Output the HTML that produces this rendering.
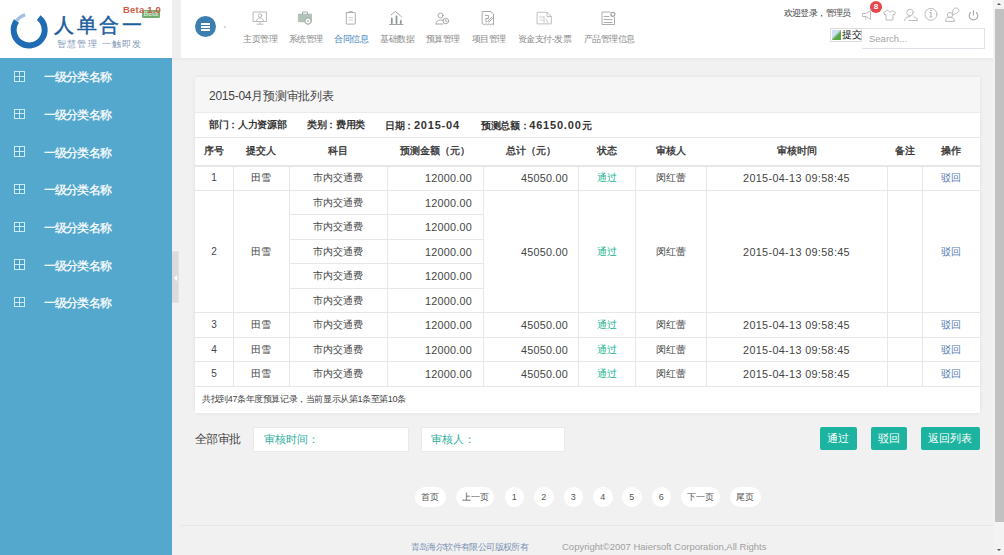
<!DOCTYPE html>
<html><head><meta charset="utf-8">
<style>
*{margin:0;padding:0;box-sizing:border-box;}
html,body{width:1004px;height:555px;overflow:hidden;}
body{position:relative;background:#f1f1f1;font-family:"Liberation Sans",sans-serif;color:#333;}
.abs{position:absolute;}
#logo{left:0;top:0;width:172px;height:58px;background:#fff;}
#gstrip{left:172px;top:0;width:9px;height:58px;background:#efefef;}
#hdr{left:181px;top:0;width:812px;height:58px;background:#fff;}
#side{left:0;top:58px;width:172px;height:497px;background:#54a8ce;}
.si{position:absolute;left:0;width:172px;height:38px;color:#fff;font-size:12px;}
.si .ic{position:absolute;left:14px;top:0.5px;width:11px;height:10.5px;border:1px solid #c8ecf9;background:#4d9fc6;}
.si .ic:before{content:"";position:absolute;left:4px;top:0;width:1px;height:8.5px;background:#c8ecf9;}
.si .ic:after{content:"";position:absolute;left:0;top:3.8px;width:9px;height:1px;background:#c8ecf9;}
.si .tx{position:absolute;left:43.5px;top:0.8px;line-height:12px;letter-spacing:-0.75px;-webkit-text-stroke:0.25px #fff;white-space:nowrap;}
#handle{left:172px;top:251px;width:7px;height:52px;background:#dbdbdb;border:1px solid #e3e3e3;border-left:0;}
#sb{left:993px;top:0;width:11px;height:555px;background:#f3f3f3;}
#thumb{left:995px;top:9px;width:9px;height:512.5px;background:#c1c1c1;}
.nav{position:absolute;top:0;height:58px;text-align:center;font-size:9px;letter-spacing:-0.5px;color:#888;white-space:nowrap;}
.nav .t{position:absolute;top:33.5px;left:0;right:0;line-height:10px;}
.nav svg{position:absolute;top:11px;left:50%;margin-left:-7px;}
#panel{left:195px;top:77px;width:786px;height:335px;background:#fff;}
#ph{left:0;top:0;width:786px;height:35.5px;background:#f6f6f6;border-bottom:1px solid #e7eaec;}
table{border-collapse:collapse;}
.n{font-size:11px;letter-spacing:0.8px;}
.btn{top:427px;height:23px;background:#1cb4a0;color:#fff;font-size:11px;line-height:23px;text-align:center;border-radius:2px;white-space:nowrap;}
.pg{top:487px;height:20px;background:#fff;color:#555;font-size:9px;line-height:20px;text-align:center;border-radius:10px;white-space:nowrap;}
</style></head>
<body>
<div class="abs" id="logo">
  <svg class="abs" style="left:0;top:0" width="54" height="58" viewBox="0 0 54 58">
    <path d="M38.7 17.7 A15.5 15.5 0 1 1 16.5 21" fill="none" stroke="#1f6cb4" stroke-width="6"/>
    <path d="M16.5 21 A15.5 15.5 0 0 1 25.2 14.9" fill="none" stroke="#6d9fd2" stroke-width="3.5" opacity=".65"/>
  </svg>
  <div class="abs" style="left:54px;top:12px;font-family:'Liberation Serif',serif;font-size:20px;line-height:26px;color:#1d5c9e;-webkit-text-stroke:0.45px #1d5c9e;letter-spacing:2.6px;white-space:nowrap">人单合一</div>
  <div class="abs" style="left:57px;top:38.5px;font-size:9px;line-height:11px;color:#7f98b6;font-weight:500;letter-spacing:1.2px;white-space:nowrap">智慧管理 一触即发</div>
  <div class="abs" style="left:141.5px;top:10px;width:18.5px;height:7.5px;border-radius:1.5px;background:#74ad72;color:#e8f5e8;font-size:7px;line-height:8px;text-align:center">Beta</div>
  <div class="abs" style="left:123px;top:5px;font-size:9.5px;line-height:10px;color:#cf5d48;font-weight:bold;white-space:nowrap;letter-spacing:0.2px">Beta 1.0</div>
</div>
<div class="abs" id="gstrip"></div>
<div class="abs" id="hdr">
  <div class="abs" style="left:14px;top:16px;width:21px;height:21px;border-radius:50%;background:#3b7fb0"></div>
  <div class="abs" style="left:20px;top:22.5px;width:9px;height:2px;background:#fff"></div>
  <div class="abs" style="left:20px;top:25.5px;width:9px;height:2px;background:#fff"></div>
  <div class="abs" style="left:20px;top:28.5px;width:9px;height:2px;background:#fff"></div>
  <div class="abs" style="left:43px;top:26px;width:2px;height:2px;background:#ccc;border-radius:1px"></div>
</div>
<div class="nav" style="left:243px;width:34px"><div class="t">主页管理</div></div>
<div class="nav" style="left:288.5px;width:34px"><div class="t">系统管理</div></div>
<div class="nav" style="left:334px;width:34px;color:#3a80bd"><div class="t">合同信息</div></div>
<div class="nav" style="left:380px;width:34px"><div class="t">基础数据</div></div>
<div class="nav" style="left:425.5px;width:34px"><div class="t">预算管理</div></div>
<div class="nav" style="left:471.5px;width:34px"><div class="t">项目管理</div></div>
<div class="nav" style="left:517.5px;width:54px"><div class="t">资金支付-发票</div></div>
<div class="nav" style="left:583.5px;width:49px"><div class="t">产品管理信息</div></div>
<div class="abs" style="left:783.5px;top:8px;font-size:9px;letter-spacing:-0.6px;line-height:11px;color:#444;white-space:nowrap">欢迎登录，管理员</div>

<svg class="abs" style="left:0;top:0" width="1004" height="58" viewBox="0 0 1004 58" fill="none" stroke-linecap="round" stroke-linejoin="round">
<g stroke="#ababab" stroke-width="0.8">
<rect x="253.5" y="12" width="13" height="9.5"/><path d="M260 21.5v2M257 24.2h6"/><circle cx="260" cy="15.6" r="1.8"/><path d="M256.6 20.6c.5-1.8 1.8-2.7 3.4-2.7s2.9.9 3.4 2.7"/>
</g>
<g>
<path d="M298.8 14.2h12.6v7.5h-12.6z" fill="#b4c3ba" stroke="#a0b2a7" stroke-width=".8"/><path d="M302.5 14.2v-2.2h5v2.2" stroke="#a0b2a7" stroke-width="1"/>
<circle cx="308" cy="21" r="3.1" fill="#fff" stroke="#a8b4ad" stroke-width="1.3" stroke-dasharray="1.2 .6"/><circle cx="308" cy="21" r="1.1" fill="#c0c8c3"/>
</g>
<g stroke="#a5a5a5" stroke-width="0.9">
<rect x="346.3" y="12.6" width="9" height="11.5" rx=".5"/><path d="M349.3 12.6v-1h3v1"/><path d="M349 17.5h3.5M349 20h3.5" stroke="#c8c8c8"/>
</g>
<g stroke="#9a9a9a" stroke-width="0.9">
<path d="M389.5 24.5h13.5"/><path d="M391.8 18.5v4.5M396.5 16.5v6.5M400.8 21v2" stroke-width="1.8" stroke="#8a9a90"/><path d="M391 15l4.5-3.5 4.5 3.8 1.6 1.6"/>
</g>
<g stroke="#a0a0a0" stroke-width="0.9">
<circle cx="440.5" cy="15.5" r="2.5"/><path d="M436 24c0-2.5 2-4 4.5-4s3 .5 3.5 1"/><path d="M436 24h7"/><circle cx="445.8" cy="21" r="2.8" fill="#fff"/><path d="M445.8 19.8v1.4l1 .6"/>
</g>
<g stroke="#a0a0a0" stroke-width="0.9">
<path d="M482.5 11.5h8.5l2.5 2.5v10.8l-1.5-1-1.5 1-1.5-1-1.5 1-1.5-1-1.5 1-2-1z"/><path d="M485.5 15.5h3v3h-2.5M486 22v-3.5M488 21l3.5-3.5 1 1-3.5 3.5z"/>
</g>
<g stroke="#b8b8b8" stroke-width="0.9">
<path d="M537.5 12.3h9.5l4.3 4.3v7.3h-13.8z"/><path d="M547 12.3v4.3h4.3"/><path d="M539.5 17h4.5M544 17v6M546 19l2 4M540 20h3" stroke="#c8c8c8"/>
</g>
<g stroke="#a5a5a5" stroke-width="0.9">
<path d="M610 12h-8v12.5h12.5v-7"/><path d="M604 16.5h5M604 19.5h8M604 22.5h8"/><circle cx="612.8" cy="14.3" r="2" stroke-width="1.2"/>
</g>
<g stroke="#b5b5b5" stroke-width="0.9">
<path d="M863 13.5h3l4.5-3v9l-4.5-3h-3z M865 16.5l1 3"/>
<path d="M887 10.5l-3.5 2 1.3 2.5 1.2-.6v5.6h7v-5.6l1.2.6 1.3-2.5-3.5-2c-.5 1-1.2 1.5-2 1.5s-1.5-.5-2-1.5z"/>
<circle cx="910" cy="12.5" r="3.3"/><path d="M904.5 20.5c0-2.5 2.5-4 5.5-4M909 20.5h8.5c0-2-1.5-3.5-3.5-3.5"/>
<circle cx="931" cy="14.3" r="6"/><path d="M931 12.5v4.5M930 17h2M930 12.5h1" stroke-width="1.1"/><circle cx="931" cy="10.5" r=".5" fill="#b0b0b0"/>
<circle cx="950" cy="15" r="2.6"/><path d="M945.5 21c0-2.5 2-3.8 4.5-3.8s4.5 1.3 4.5 3.8z"/><path d="M952.5 12c0-2 1.5-4 3.5-4s2.8 1 2.8 2.5-1.5 3-3.5 3l-1.2 1z"/>
<path d="M970.6 12.5a4.3 4.3 0 1 0 5.8 0M973.5 10.5v4.5" stroke="#a8a8a8" stroke-width="1.1"/>
</g>
</svg>
<div class="abs" style="left:870px;top:1px;width:12px;height:11.5px;border-radius:50%;background:#e5474f;color:#fff;font-size:8px;line-height:12px;text-align:center;font-weight:bold">8</div>
<div class="abs" style="left:830px;top:28px;width:32px;height:14px;border:1px solid #ddd;background:#fff">
  <div class="abs" style="left:1px;top:1px;width:9px;height:10px;background:linear-gradient(135deg,#cfe0f5 40%,#5aa545 60%)"></div>
  <div class="abs" style="left:11px;top:0px;font-size:10px;line-height:12px;color:#111;white-space:nowrap">提交</div>
</div>
<div class="abs" style="left:862px;top:28px;width:123px;height:21px;border:1px solid #e2e2e2;border-left:0;border-bottom-color:#dfe1e8;background:#fff">
  <div class="abs" style="left:7px;top:4px;font-size:9.5px;line-height:11px;color:#a5a5a5">Search...</div>
</div>

<div class="abs" id="side">
  <div class="si" style="top:12.50px"><div class="ic"></div><div class="tx">一级分类名称</div></div>
  <div class="si" style="top:50.15px"><div class="ic"></div><div class="tx">一级分类名称</div></div>
  <div class="si" style="top:87.80px"><div class="ic"></div><div class="tx">一级分类名称</div></div>
  <div class="si" style="top:125.45px"><div class="ic"></div><div class="tx">一级分类名称</div></div>
  <div class="si" style="top:163.10px"><div class="ic"></div><div class="tx">一级分类名称</div></div>
  <div class="si" style="top:200.75px"><div class="ic"></div><div class="tx">一级分类名称</div></div>
  <div class="si" style="top:238.40px"><div class="ic"></div><div class="tx">一级分类名称</div></div>
</div>
<div class="abs" id="handle"><div class="abs" style="left:1.5px;top:23px;width:0;height:0;border-top:3px solid transparent;border-bottom:3px solid transparent;border-right:3px solid #fff"></div></div>
<div class="abs" style="left:195px;top:77px;width:785px;height:336px;background:#fff;box-shadow:0 0 4px rgba(0,0,0,.07)"></div>
<div class="abs" style="left:195px;top:77px;width:785px;height:35px;background:#f6f6f6"></div>
<div class="abs" style="left:195px;top:112px;width:785px;height:1px;background:#ebebeb"></div>
<div class="abs" style="left:209px;top:89px;font-size:12px;letter-spacing:-0.25px;line-height:15px;color:#444;white-space:nowrap">2015-04月预测审批列表</div>
<div class="abs" style="left:209px;top:119px;font-size:9.8px;letter-spacing:-0.35px;line-height:12px;color:#333;font-weight:bold;white-space:nowrap">部门：人力资源部</div>
<div class="abs" style="left:307px;top:119px;font-size:9.8px;letter-spacing:-0.35px;line-height:12px;color:#333;font-weight:bold;white-space:nowrap">类别：费用类</div>
<div class="abs" style="left:385px;top:119px;font-size:9.8px;letter-spacing:-0.35px;line-height:12px;color:#333;font-weight:bold;white-space:nowrap">日期：<span class=n>2015-04</span></div>
<div class="abs" style="left:481px;top:119px;font-size:9.8px;letter-spacing:-0.35px;line-height:12px;color:#333;font-weight:bold;white-space:nowrap">预测总额：<span class=n>46150.00</span>元</div>
<div class="abs" style="left:195px;top:137px;width:785px;height:1px;background:#e7e7e7"></div>
<div class="abs" style="left:195px;top:145px;width:38px;text-align:center;font-size:9.8px;line-height:12px;color:#333;-webkit-text-stroke:0.35px #333;white-space:nowrap">序号</div>
<div class="abs" style="left:233px;top:145px;width:56.5px;text-align:center;font-size:9.8px;line-height:12px;color:#333;-webkit-text-stroke:0.35px #333;white-space:nowrap">提交人</div>
<div class="abs" style="left:289.5px;top:145px;width:97.5px;text-align:center;font-size:9.8px;line-height:12px;color:#333;-webkit-text-stroke:0.35px #333;white-space:nowrap">科目</div>
<div class="abs" style="left:387px;top:145px;width:96px;text-align:center;font-size:9.8px;line-height:12px;color:#333;-webkit-text-stroke:0.35px #333;white-space:nowrap">预测金额（元）</div>
<div class="abs" style="left:483px;top:145px;width:95px;text-align:center;font-size:9.8px;line-height:12px;color:#333;-webkit-text-stroke:0.35px #333;white-space:nowrap">总计（元）</div>
<div class="abs" style="left:578px;top:145px;width:57px;text-align:center;font-size:9.8px;line-height:12px;color:#333;-webkit-text-stroke:0.35px #333;white-space:nowrap">状态</div>
<div class="abs" style="left:635px;top:145px;width:71px;text-align:center;font-size:9.8px;line-height:12px;color:#333;-webkit-text-stroke:0.35px #333;white-space:nowrap">审核人</div>
<div class="abs" style="left:706px;top:145px;width:181px;text-align:center;font-size:9.8px;line-height:12px;color:#333;-webkit-text-stroke:0.35px #333;white-space:nowrap">审核时间</div>
<div class="abs" style="left:887px;top:145px;width:35px;text-align:center;font-size:9.8px;line-height:12px;color:#333;-webkit-text-stroke:0.35px #333;white-space:nowrap">备注</div>
<div class="abs" style="left:922px;top:145px;width:58px;text-align:center;font-size:9.8px;line-height:12px;color:#333;-webkit-text-stroke:0.35px #333;white-space:nowrap">操作</div>
<div class="abs" style="left:195px;top:165px;width:785px;height:2px;background:#e7e7e7"></div>
<div class="abs" style="left:195px;top:189.8px;width:785px;height:1px;background:#e7e7e7"></div>
<div class="abs" style="left:289.5px;top:214.3px;width:193.5px;height:1px;background:#e7e7e7"></div>
<div class="abs" style="left:289.5px;top:238.8px;width:193.5px;height:1px;background:#e7e7e7"></div>
<div class="abs" style="left:289.5px;top:263.3px;width:193.5px;height:1px;background:#e7e7e7"></div>
<div class="abs" style="left:289.5px;top:287.8px;width:193.5px;height:1px;background:#e7e7e7"></div>
<div class="abs" style="left:195px;top:312.3px;width:785px;height:1px;background:#e7e7e7"></div>
<div class="abs" style="left:195px;top:336.8px;width:785px;height:1px;background:#e7e7e7"></div>
<div class="abs" style="left:195px;top:361.3px;width:785px;height:1px;background:#e7e7e7"></div>
<div class="abs" style="left:195px;top:385.8px;width:785px;height:1px;background:#e7e7e7"></div>
<div class="abs" style="left:232.5px;top:167px;width:1px;height:219.5px;background:#e7e7e7"></div>
<div class="abs" style="left:289.0px;top:167px;width:1px;height:219.5px;background:#e7e7e7"></div>
<div class="abs" style="left:386.5px;top:167px;width:1px;height:219.5px;background:#e7e7e7"></div>
<div class="abs" style="left:482.5px;top:167px;width:1px;height:219.5px;background:#e7e7e7"></div>
<div class="abs" style="left:577.5px;top:167px;width:1px;height:219.5px;background:#e7e7e7"></div>
<div class="abs" style="left:634.5px;top:167px;width:1px;height:219.5px;background:#e7e7e7"></div>
<div class="abs" style="left:705.5px;top:167px;width:1px;height:219.5px;background:#e7e7e7"></div>
<div class="abs" style="left:886.5px;top:167px;width:1px;height:219.5px;background:#e7e7e7"></div>
<div class="abs" style="left:921.5px;top:167px;width:1px;height:219.5px;background:#e7e7e7"></div>
<div class="abs" style="left:195px;top:166.0px;width:38px;height:24.5px;line-height:24.5px;text-align:center;font-size:10px;color:#444;white-space:nowrap;">1</div>
<div class="abs" style="left:233px;top:166.0px;width:56.5px;height:24.5px;line-height:24.5px;text-align:center;font-size:10px;color:#444;white-space:nowrap;">田雪</div>
<div class="abs" style="left:289.5px;top:166.0px;width:97.5px;height:24.5px;line-height:24.5px;text-align:center;font-size:10px;color:#444;white-space:nowrap;">市内交通费</div>
<div class="abs" style="left:387px;top:166.0px;width:96px;height:24.5px;line-height:24.5px;text-align:right;padding-right:11px;font-size:10px;color:#444;white-space:nowrap;font-size:10.8px;letter-spacing:0.25px;">12000.00</div>
<div class="abs" style="left:483px;top:166.0px;width:95px;height:24.5px;line-height:24.5px;text-align:right;padding-right:11px;font-size:10px;color:#444;white-space:nowrap;font-size:10.8px;letter-spacing:0.25px;padding-right:10px;">45050.00</div>
<div class="abs" style="left:578px;top:166.0px;width:57px;height:24.5px;line-height:24.5px;text-align:center;font-size:10px;color:#1ab394;white-space:nowrap;">通过</div>
<div class="abs" style="left:635px;top:166.0px;width:71px;height:24.5px;line-height:24.5px;text-align:center;font-size:10px;color:#444;white-space:nowrap;">闵红蕾</div>
<div class="abs" style="left:706px;top:166.0px;width:181px;height:24.5px;line-height:24.5px;text-align:center;font-size:10px;color:#444;white-space:nowrap;font-size:10.8px;letter-spacing:0.35px;">2015-04-13 09:58:45</div>
<div class="abs" style="left:922px;top:166.0px;width:58px;height:24.5px;line-height:24.5px;text-align:center;font-size:10px;color:#5a80b5;white-space:nowrap;">驳回</div>
<div class="abs" style="left:195px;top:190.5px;width:38px;height:122.5px;line-height:122.5px;text-align:center;font-size:10px;color:#444;white-space:nowrap;">2</div>
<div class="abs" style="left:233px;top:190.5px;width:56.5px;height:122.5px;line-height:122.5px;text-align:center;font-size:10px;color:#444;white-space:nowrap;">田雪</div>
<div class="abs" style="left:289.5px;top:190.5px;width:97.5px;height:24.5px;line-height:24.5px;text-align:center;font-size:10px;color:#444;white-space:nowrap;">市内交通费</div>
<div class="abs" style="left:387px;top:190.5px;width:96px;height:24.5px;line-height:24.5px;text-align:right;padding-right:11px;font-size:10px;color:#444;white-space:nowrap;font-size:10.8px;letter-spacing:0.25px;">12000.00</div>
<div class="abs" style="left:289.5px;top:215.0px;width:97.5px;height:24.5px;line-height:24.5px;text-align:center;font-size:10px;color:#444;white-space:nowrap;">市内交通费</div>
<div class="abs" style="left:387px;top:215.0px;width:96px;height:24.5px;line-height:24.5px;text-align:right;padding-right:11px;font-size:10px;color:#444;white-space:nowrap;font-size:10.8px;letter-spacing:0.25px;">12000.00</div>
<div class="abs" style="left:289.5px;top:239.5px;width:97.5px;height:24.5px;line-height:24.5px;text-align:center;font-size:10px;color:#444;white-space:nowrap;">市内交通费</div>
<div class="abs" style="left:387px;top:239.5px;width:96px;height:24.5px;line-height:24.5px;text-align:right;padding-right:11px;font-size:10px;color:#444;white-space:nowrap;font-size:10.8px;letter-spacing:0.25px;">12000.00</div>
<div class="abs" style="left:289.5px;top:264.0px;width:97.5px;height:24.5px;line-height:24.5px;text-align:center;font-size:10px;color:#444;white-space:nowrap;">市内交通费</div>
<div class="abs" style="left:387px;top:264.0px;width:96px;height:24.5px;line-height:24.5px;text-align:right;padding-right:11px;font-size:10px;color:#444;white-space:nowrap;font-size:10.8px;letter-spacing:0.25px;">12000.00</div>
<div class="abs" style="left:289.5px;top:288.5px;width:97.5px;height:24.5px;line-height:24.5px;text-align:center;font-size:10px;color:#444;white-space:nowrap;">市内交通费</div>
<div class="abs" style="left:387px;top:288.5px;width:96px;height:24.5px;line-height:24.5px;text-align:right;padding-right:11px;font-size:10px;color:#444;white-space:nowrap;font-size:10.8px;letter-spacing:0.25px;">12000.00</div>
<div class="abs" style="left:483px;top:190.5px;width:95px;height:122.5px;line-height:122.5px;text-align:right;padding-right:11px;font-size:10px;color:#444;white-space:nowrap;font-size:10.8px;letter-spacing:0.25px;padding-right:10px;">45050.00</div>
<div class="abs" style="left:578px;top:190.5px;width:57px;height:122.5px;line-height:122.5px;text-align:center;font-size:10px;color:#1ab394;white-space:nowrap;">通过</div>
<div class="abs" style="left:635px;top:190.5px;width:71px;height:122.5px;line-height:122.5px;text-align:center;font-size:10px;color:#444;white-space:nowrap;">闵红蕾</div>
<div class="abs" style="left:706px;top:190.5px;width:181px;height:122.5px;line-height:122.5px;text-align:center;font-size:10px;color:#444;white-space:nowrap;font-size:10.8px;letter-spacing:0.35px;">2015-04-13 09:58:45</div>
<div class="abs" style="left:922px;top:190.5px;width:58px;height:122.5px;line-height:122.5px;text-align:center;font-size:10px;color:#5a80b5;white-space:nowrap;">驳回</div>
<div class="abs" style="left:195px;top:313.0px;width:38px;height:24.5px;line-height:24.5px;text-align:center;font-size:10px;color:#444;white-space:nowrap;">3</div>
<div class="abs" style="left:233px;top:313.0px;width:56.5px;height:24.5px;line-height:24.5px;text-align:center;font-size:10px;color:#444;white-space:nowrap;">田雪</div>
<div class="abs" style="left:289.5px;top:313.0px;width:97.5px;height:24.5px;line-height:24.5px;text-align:center;font-size:10px;color:#444;white-space:nowrap;">市内交通费</div>
<div class="abs" style="left:387px;top:313.0px;width:96px;height:24.5px;line-height:24.5px;text-align:right;padding-right:11px;font-size:10px;color:#444;white-space:nowrap;font-size:10.8px;letter-spacing:0.25px;">12000.00</div>
<div class="abs" style="left:483px;top:313.0px;width:95px;height:24.5px;line-height:24.5px;text-align:right;padding-right:11px;font-size:10px;color:#444;white-space:nowrap;font-size:10.8px;letter-spacing:0.25px;padding-right:10px;">45050.00</div>
<div class="abs" style="left:578px;top:313.0px;width:57px;height:24.5px;line-height:24.5px;text-align:center;font-size:10px;color:#1ab394;white-space:nowrap;">通过</div>
<div class="abs" style="left:635px;top:313.0px;width:71px;height:24.5px;line-height:24.5px;text-align:center;font-size:10px;color:#444;white-space:nowrap;">闵红蕾</div>
<div class="abs" style="left:706px;top:313.0px;width:181px;height:24.5px;line-height:24.5px;text-align:center;font-size:10px;color:#444;white-space:nowrap;font-size:10.8px;letter-spacing:0.35px;">2015-04-13 09:58:45</div>
<div class="abs" style="left:922px;top:313.0px;width:58px;height:24.5px;line-height:24.5px;text-align:center;font-size:10px;color:#5a80b5;white-space:nowrap;">驳回</div>
<div class="abs" style="left:195px;top:337.5px;width:38px;height:24.5px;line-height:24.5px;text-align:center;font-size:10px;color:#444;white-space:nowrap;">4</div>
<div class="abs" style="left:233px;top:337.5px;width:56.5px;height:24.5px;line-height:24.5px;text-align:center;font-size:10px;color:#444;white-space:nowrap;">田雪</div>
<div class="abs" style="left:289.5px;top:337.5px;width:97.5px;height:24.5px;line-height:24.5px;text-align:center;font-size:10px;color:#444;white-space:nowrap;">市内交通费</div>
<div class="abs" style="left:387px;top:337.5px;width:96px;height:24.5px;line-height:24.5px;text-align:right;padding-right:11px;font-size:10px;color:#444;white-space:nowrap;font-size:10.8px;letter-spacing:0.25px;">12000.00</div>
<div class="abs" style="left:483px;top:337.5px;width:95px;height:24.5px;line-height:24.5px;text-align:right;padding-right:11px;font-size:10px;color:#444;white-space:nowrap;font-size:10.8px;letter-spacing:0.25px;padding-right:10px;">45050.00</div>
<div class="abs" style="left:578px;top:337.5px;width:57px;height:24.5px;line-height:24.5px;text-align:center;font-size:10px;color:#1ab394;white-space:nowrap;">通过</div>
<div class="abs" style="left:635px;top:337.5px;width:71px;height:24.5px;line-height:24.5px;text-align:center;font-size:10px;color:#444;white-space:nowrap;">闵红蕾</div>
<div class="abs" style="left:706px;top:337.5px;width:181px;height:24.5px;line-height:24.5px;text-align:center;font-size:10px;color:#444;white-space:nowrap;font-size:10.8px;letter-spacing:0.35px;">2015-04-13 09:58:45</div>
<div class="abs" style="left:922px;top:337.5px;width:58px;height:24.5px;line-height:24.5px;text-align:center;font-size:10px;color:#5a80b5;white-space:nowrap;">驳回</div>
<div class="abs" style="left:195px;top:362.0px;width:38px;height:24.5px;line-height:24.5px;text-align:center;font-size:10px;color:#444;white-space:nowrap;">5</div>
<div class="abs" style="left:233px;top:362.0px;width:56.5px;height:24.5px;line-height:24.5px;text-align:center;font-size:10px;color:#444;white-space:nowrap;">田雪</div>
<div class="abs" style="left:289.5px;top:362.0px;width:97.5px;height:24.5px;line-height:24.5px;text-align:center;font-size:10px;color:#444;white-space:nowrap;">市内交通费</div>
<div class="abs" style="left:387px;top:362.0px;width:96px;height:24.5px;line-height:24.5px;text-align:right;padding-right:11px;font-size:10px;color:#444;white-space:nowrap;font-size:10.8px;letter-spacing:0.25px;">12000.00</div>
<div class="abs" style="left:483px;top:362.0px;width:95px;height:24.5px;line-height:24.5px;text-align:right;padding-right:11px;font-size:10px;color:#444;white-space:nowrap;font-size:10.8px;letter-spacing:0.25px;padding-right:10px;">45050.00</div>
<div class="abs" style="left:578px;top:362.0px;width:57px;height:24.5px;line-height:24.5px;text-align:center;font-size:10px;color:#1ab394;white-space:nowrap;">通过</div>
<div class="abs" style="left:635px;top:362.0px;width:71px;height:24.5px;line-height:24.5px;text-align:center;font-size:10px;color:#444;white-space:nowrap;">闵红蕾</div>
<div class="abs" style="left:706px;top:362.0px;width:181px;height:24.5px;line-height:24.5px;text-align:center;font-size:10px;color:#444;white-space:nowrap;font-size:10.8px;letter-spacing:0.35px;">2015-04-13 09:58:45</div>
<div class="abs" style="left:922px;top:362.0px;width:58px;height:24.5px;line-height:24.5px;text-align:center;font-size:10px;color:#5a80b5;white-space:nowrap;">驳回</div>
<div class="abs" style="left:202px;top:394px;font-size:9px;letter-spacing:-0.4px;line-height:11px;color:#444;white-space:nowrap">共找到47条年度预算记录，当前显示从第1条至第10条</div>


<div class="abs" style="left:195px;top:432px;font-size:12px;letter-spacing:-0.65px;line-height:15px;color:#444;white-space:nowrap">全部审批</div>
<div class="abs" style="left:252.5px;top:426.5px;width:156px;height:25.5px;background:#fff;border:1px solid #e9e9e9"><div class="abs" style="left:10.5px;top:5.5px;font-size:11px;line-height:13px;color:#2eae9c;white-space:nowrap">审核时间：</div></div>
<div class="abs" style="left:421px;top:426.5px;width:143.5px;height:25.5px;background:#fff;border:1px solid #e9e9e9"><div class="abs" style="left:9px;top:5.5px;font-size:11px;line-height:13px;color:#2eae9c;white-space:nowrap">审核人：</div></div>
<div class="abs btn" style="left:820px;width:36.5px">通过</div>
<div class="abs btn" style="left:870.5px;width:36.5px">驳回</div>
<div class="abs btn" style="left:921px;width:58.5px">返回列表</div>
<div class="abs pg" style="left:415px;width:30.5px">首页</div>
<div class="abs pg" style="left:456px;width:38px">上一页</div>
<div class="abs pg" style="left:504.5px;width:19.5px">1</div>
<div class="abs pg" style="left:534px;width:19.5px">2</div>
<div class="abs pg" style="left:563.5px;width:19.5px">3</div>
<div class="abs pg" style="left:593px;width:19.5px">4</div>
<div class="abs pg" style="left:622px;width:19.5px">5</div>
<div class="abs pg" style="left:651.5px;width:19.5px">6</div>
<div class="abs pg" style="left:680.5px;width:39px">下一页</div>
<div class="abs pg" style="left:729.5px;width:31px">尾页</div>
<div class="abs" style="left:181px;top:525px;width:812px;height:1px;background:#e6e6e6"></div>
<div class="abs" style="left:172px;top:58px;width:821px;height:4px;background:linear-gradient(#e9e9e9,#f1f1f1)"></div>
<div class="abs" style="left:410.5px;top:542px;font-size:9px;letter-spacing:-0.6px;line-height:11px;color:#7d93b3;white-space:nowrap">青岛海尔软件有限公司版权所有</div>
<div class="abs" style="left:562px;top:541px;font-size:9.5px;line-height:11px;color:#a0a0a0;white-space:nowrap">Copyright©2007 Haiersoft Corporation,All Rights</div>
<div class="abs" id="sb"></div>
<div class="abs" id="thumb"></div>
<div class="abs" style="left:997px;top:2.5px;width:0;height:0;border-left:2.5px solid transparent;border-right:2.5px solid transparent;border-bottom:2.5px solid #555"></div>
<div class="abs" style="left:997px;top:548.5px;width:0;height:0;border-left:2.5px solid transparent;border-right:2.5px solid transparent;border-top:2.5px solid #555"></div>
</body></html>
